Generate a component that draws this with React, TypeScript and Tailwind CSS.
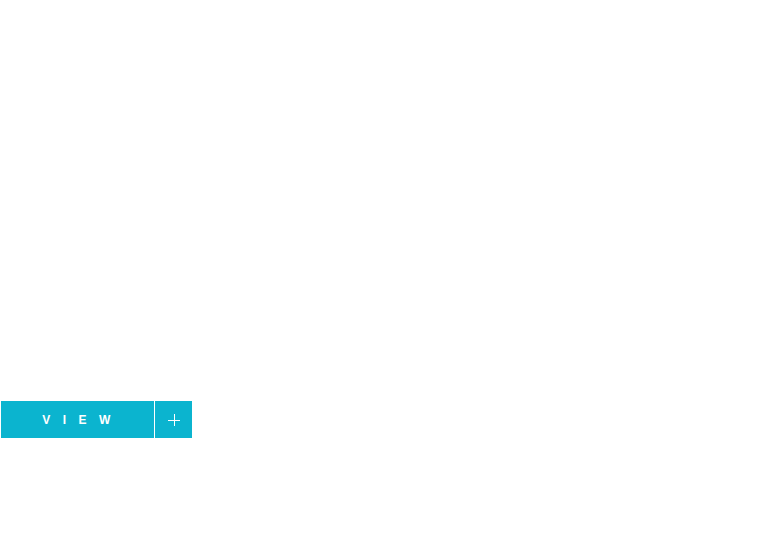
const App = () => {
  return (
    <div className="w-[760px] h-[540px] bg-white pt-[401px] pl-[1px]">
      <div className="flex flex-row h-[37px] gap-[1px]">
        <button className="w-[153px] h-full bg-[#0bb4cf] text-white flex items-center justify-center">
          <span
            className="text-[12px] font-bold tracking-[12.5px] pl-[10px] leading-none"
            style={{ fontFamily: '"Liberation Sans", Arial, sans-serif' }}
          >
            VIEW
          </span>
        </button>
        <button className="w-[37px] h-full bg-[#0bb4cf] flex items-center justify-center">
          <svg width="12" height="12" viewBox="0 0 12 12">
            <path d="M6 0 V12 M0 6 H12" stroke="white" strokeWidth="1" shapeRendering="crispEdges" />
          </svg>
        </button>
      </div>
    </div>
  );
};

export default App;
